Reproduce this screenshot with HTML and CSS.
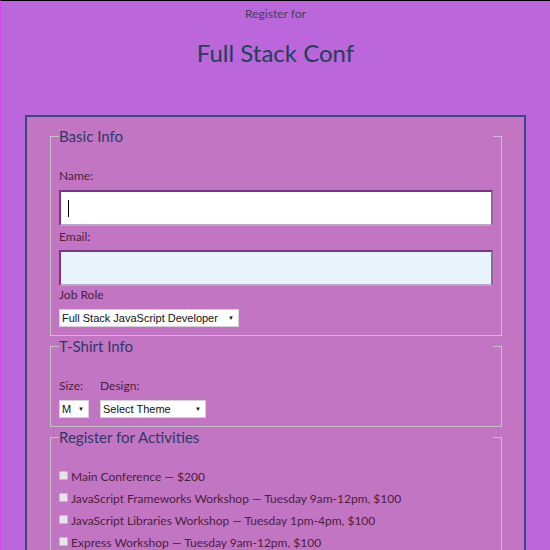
FILE: index.html
```html
<!DOCTYPE html>
<html lang="en">
<head>
<meta charset="utf-8">
<title>Full Stack Conf</title>
<link rel="stylesheet" href="styles.css">
</head>
<body>
<div class="page">
  <header class="header">
    <p class="kicker">Register for</p>
    <h1 class="title">Full Stack Conf</h1>
  </header>
  <form class="form">
    <fieldset class="group">
      <legend class="legend">Basic Info</legend>
      <label class="label label-first" for="name">Name:</label>
      <div class="text-input"><span class="caret"></span></div>
      <label class="label label-email" for="mail">Email:</label>
      <div class="text-input text-input-filled"></div>
      <label class="label label-job">Job Role</label>
      <div class="select select-job"><span class="select-text">Full Stack JavaScript Developer</span><span class="arrow">▼</span></div>
    </fieldset>
    <fieldset class="group">
      <legend class="legend">T-Shirt Info</legend>
      <div class="shirt-row">
        <div class="shirt-col">
          <label class="label label-first">Size:</label>
          <div class="select select-size"><span class="select-text">M</span><span class="arrow">▼</span></div>
        </div>
        <div class="shirt-col">
          <label class="label label-first">Design:</label>
          <div class="select select-design"><span class="select-text">Select Theme</span><span class="arrow">▼</span></div>
        </div>
      </div>
    </fieldset>
    <fieldset class="group group-activities">
      <legend class="legend">Register for Activities</legend>
      <ul class="activities">
        <li class="activity"><span class="box"></span>Main Conference — $200</li>
        <li class="activity"><span class="box"></span>JavaScript Frameworks Workshop — Tuesday 9am-12pm, $100</li>
        <li class="activity"><span class="box"></span>JavaScript Libraries Workshop — Tuesday 1pm-4pm, $100</li>
        <li class="activity"><span class="box"></span>Express Workshop — Tuesday 9am-12pm, $100</li>
      </ul>
    </fieldset>
  </form>
</div>
</body>
</html>
```

FILE: styles.css
```css
html, body {
  margin: 0;
  padding: 0;
  height: 100%;
  overflow: hidden;
}

body {
  background: #bb67db;
  font-family: Lato, "Open Sans", sans-serif;
}

.page {
  border-top: 1px solid #000;
  border-left: 1px solid #d845e6;
  min-height: 100%;
  box-sizing: border-box;
}

.header {
  text-align: center;
}

.kicker {
  margin: 0;
  padding-top: 5px;
  font-size: 12px;
  line-height: 15px;
  color: #45405e;
}

.title {
  margin: 17px 0 0;
  font-size: 24px;
  line-height: 30px;
  font-weight: 400;
  color: #243f55;
}

.form {
  margin: 47px 24px 0 24px;
  border: 2px solid #3a4a78;
  border-bottom: none;
  background: #c275c3;
  padding: 9px 22px 40px 23px;
}

.group {
  margin: 0;
  padding: 0 8px 8px;
  border: 1px solid #c8c2c8;
}

.legend {
  width: 100%;
  box-sizing: border-box;
  padding: 0;
  font-size: 15px;
  line-height: 20px;
  color: #2b3c66;
}

.label {
  display: block;
  font-size: 12px;
  line-height: 16px;
  color: #4b1f3d;
}

.label-first {
  margin-top: 22px;
}

.label-email {
  margin-top: 3px;
}

.label-job {
  margin-top: 1px;
}

.text-input {
  margin-top: 6px;
  height: 32px;
  background: #fff;
  border: 2px solid #7b3488;
  border-right-color: #8d6a98;
  border-bottom-color: #b9a6c0;
  display: flex;
  align-items: center;
  padding-left: 7px;
}

.text-input-filled {
  margin-top: 5px;
  background: #e8f4fb;
}

.caret {
  width: 1px;
  height: 17px;
  background: #000;
}

.select {
  margin-top: 6px;
  height: 18px;
  box-sizing: border-box;
  background: #fff;
  border: 1px solid #d8d0d8;
  display: flex;
  align-items: center;
  justify-content: space-between;
  padding: 0 4px 0 2px;
  font-family: "Liberation Sans", Arial, sans-serif;
  font-size: 11px;
  color: #111;
}

.select-job {
  width: 180px;
}

.select-size {
  width: 30px;
}

.select-design {
  width: 106px;
}

.arrow {
  font-size: 6px;
  color: #111;
}

.shirt-row {
  display: flex;
  gap: 11px;
}

.shirt-col {
  display: flex;
  flex-direction: column;
  align-items: flex-start;
}

.activities {
  list-style: none;
  margin: 19px 0 0;
  padding: 0;
}

.activity {
  display: flex;
  align-items: center;
  font-size: 12px;
  line-height: 22px;
  color: #4b1f3d;
}

.box {
  width: 7px;
  height: 7px;
  margin: 0 3px 0 0;
  background: #e6e6e6;
  border: 1px solid #bcbcbc;
  border-radius: 1px;
  position: relative;
  top: -2px;
}
```
